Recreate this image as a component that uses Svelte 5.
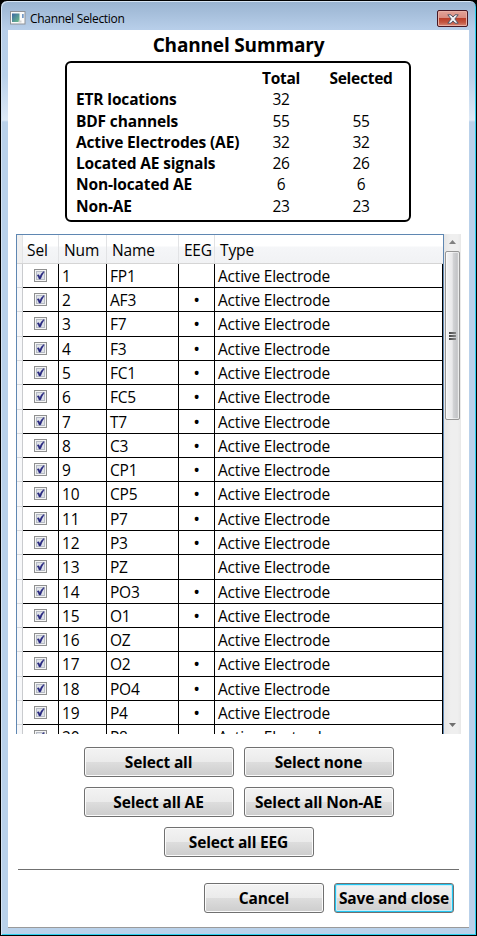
<script>
  const summary = [
    ['', 'Total', 'Selected'],
    ['ETR locations', '32', ''],
    ['BDF channels', '55', '55'],
    ['Active Electrodes (AE)', '32', '32'],
    ['Located AE signals', '26', '26'],
    ['Non-located AE', '6', '6'],
    ['Non-AE', '23', '23']
  ];
  const names = ['FP1', 'AF3', 'F7', 'F3', 'FC1', 'FC5', 'T7', 'C3', 'CP1', 'CP5', 'P7', 'P3', 'PZ', 'PO3', 'O1', 'OZ', 'O2', 'PO4', 'P4', 'P8'];
  const nonEeg = ['FP1', 'PZ', 'OZ'];
</script>

<div class="window">
  <header class="titlebar">
    <svg class="appicon" width="16" height="14" viewBox="0 0 16 14">
      <defs><linearGradient id="ig" x1="0" y1="0" x2="1" y2="1"><stop offset="0" stop-color="#3c67a5" /><stop offset="1" stop-color="#6cc08a" /></linearGradient></defs>
      <rect x=".5" y=".5" width="14.5" height="12.5" fill="#fafafa" stroke="#8e9298" />
      <rect x="2" y="2.5" width="7.5" height="8.5" fill="url(#ig)" />
      <rect x="12.3" y="3" width="1.2" height="4" fill="#3a6fb0" />
      <rect x="8.5" y="9.5" width="3" height="2" fill="#d2d2d2" />
    </svg>
    <span class="title">Channel Selection</span>
    <button class="close" aria-label="Close">
      <svg width="12" height="10" viewBox="0 0 12 10">
        <path d="M.8 .8H4L6 3.1 8 .8h3.2L7.8 5l3.4 4.2H8L6 6.9 4 9.2H.8L4.2 5z" fill="#f4f4f6" stroke="#535666" stroke-width="1" />
      </svg>
    </button>
  </header>

  <main>
    <h1>Channel Summary</h1>
    <section class="summary">
      {#each summary as [label, total, selected], i}
        <div class="srow" class:head={i === 0}>
          <b>{label}</b><span>{total}</span><span>{selected}</span>
        </div>
      {/each}
    </section>

    <section class="list">
      <div class="grid">
        <div class="row hrow">
          <i></i><span>Sel</span><span>Num</span><span>Name</span><span>EEG</span><span>Type</span>
        </div>
        {#each names as name, i}
          <div class="row drow">
            <i></i>
            <span class="sel">
              <svg width="13" height="13" viewBox="0 0 13 13">
                <rect x=".5" y=".5" width="12" height="12" fill="#f4f4f4" stroke="#8e8f8f" />
                <rect x="2.5" y="2.5" width="8" height="8" fill="#dfe2e8" stroke="#b5bac4" />
                <path d="M3.3 6.2L4.8 5.8 5.8 7.9Q7.2 4.4 9.7 2.6L10 3.1Q7.8 6 6.5 10H5.2Q4.5 7.8 3.3 6.2z" fill="#25257e" stroke="#25257e" stroke-width=".6" />
              </svg>
            </span>
            <span>{i + 1}</span>
            <span>{name}</span>
            <span class="eeg">{#if !nonEeg.includes(name)}•{/if}</span>
            <span class="type">Active Electrode</span>
          </div>
        {/each}
      </div>
      <div class="scroll">
        <svg class="arrow" width="7" height="4" viewBox="0 0 7 4"><path d="M0 4L3.5 0 7 4z" fill="#808080" /></svg>
        <div class="thumb"><b></b><b></b><b></b></div>
        <svg class="arrow down" width="7" height="4" viewBox="0 0 7 4"><path d="M0 0H7L3.5 4z" fill="#707070" /></svg>
      </div>
    </section>

    <section class="choices">
      <button>Select all</button>
      <button>Select none</button>
      <button>Select all AE</button>
      <button>Select all Non-AE</button>
      <button>Select all EEG</button>
    </section>

    <footer>
      <button>Cancel</button>
      <button class="default">Save and close</button>
    </footer>
  </main>
</div>

<style>
  :global(body) { background: #000; }
  * { box-sizing: border-box; }
  .window {
    width: 477px; height: 936px; overflow: hidden;
    border: 1px solid #000; border-radius: 7px 7px 0 0;
    background: linear-gradient(#99b3d0 0, #b7cee9 28px, #b9d1ea 75px, #dde9f6 119px, #b9d1ea 121px);
    box-shadow: inset 1px 1px 0 #d6e4f3, inset -1px -1px 0 #2ccfee;
    padding: 0 7px;
    font-family: "Open Sans", "Noto Sans", sans-serif; font-size: 15px; color: #000;
  }
  .titlebar { height: 29px; display: flex; align-items: flex-start; padding: 10px 1px 0; }
  .appicon { margin-left: 1px; flex: none; }
  .title { margin-left: 4px; font-size: 12px; line-height: 16px; letter-spacing: -.32px; white-space: nowrap; }
  .close {
    margin: -1px 0 0 auto; width: 31px; height: 17px; padding: 0; display: flex; align-items: center; justify-content: center;
    border: 1px solid #471824; border-radius: 2px;
    background: linear-gradient(#e3a398 0, #d98c80 45%, #bb3f29 50%, #c35540 75%, #d88775);
    box-shadow: inset 0 0 0 1px #e8b0a5;
  }
  main { background: #fff; height: 898px; border-bottom: 1px solid #9a9a9a; overflow: hidden; }
  h1 { margin: 0; height: 31px; line-height: 30px; font-size: 19px; font-weight: 700; text-align: center; white-space: nowrap; letter-spacing: -.17px; }
  .summary {
    width: 346px; height: 161px; margin-left: 57px; padding: 5px 0 0 9px;
    border: 2px solid #000; border-radius: 6px;
  }
  .srow { display: grid; grid-template-columns: 165px 80px 80px; height: 21.3px; line-height: 21.4px; white-space: nowrap; }
  .srow b { font-size: 15.5px; letter-spacing: -.15px; }
  .srow span { text-align: center; font-size: 15.5px; letter-spacing: -.4px; }
  .srow.head span { font-weight: 700; font-size: 15.5px; letter-spacing: -.25px; }
  .list { display: flex; margin: 12px 8px 0; height: 500px; }
  .grid { width: 428px; height: 500px; flex: none; overflow: hidden; border: 1px solid #5f87b2; border-bottom: 0; font-size: 15.5px; letter-spacing: -.09px; }
  .row { display: grid; grid-template-columns: 6px 36px 48px 72px 36px 228px; }
  .row > * { overflow: hidden; white-space: nowrap; }
  .hrow { height: 28.85px; line-height: 31px; background: linear-gradient(#fff 0, #fff 11px, #f5f6f8 12px, #f1f2f4); border-bottom: 1px solid #d5d5d5; }
  .hrow span { padding-left: 5px; border-right: 1px solid #e2e3e5; }
  .hrow span:nth-child(2) { padding-left: 4px; }
  .hrow span:nth-child(5) { letter-spacing: -.3px; }
  .hrow span:last-child { border-right: 0; }
  .hrow i { background: #f0f0f0; border-right: 1px solid #e2e3e5; }
  .drow { height: 24.29px; line-height: 25px; }
  .drow i { border-right: 1px solid #c9cbce; border-bottom: 1px solid #d5d8dc; background: #f7f8fa; }
  .drow span { border-right: 1px solid #000; border-bottom: 1px solid #000; padding-left: 3px; letter-spacing: -.2px; }
  .drow .sel { padding: 5px 0 0 11px; line-height: 0; }
  .drow .eeg { padding: 0; text-align: center; font-size: 18px; }
  .scroll {
    width: 17px; height: 500px; display: flex; flex-direction: column; align-items: center;
    background: linear-gradient(90deg, #e6e6e6, #efefef 40%, #efefef 80%, #e8e8e8);
  }
  .arrow { margin-top: 6px; flex: none; }
  .arrow.down { margin: auto 0 7px; }
  .thumb {
    width: 15px; height: 169px; margin-top: 7px; flex: none; border: 1px solid #979797; border-radius: 2px;
    background: linear-gradient(90deg, #f5f5f5, #e9e9eb 48%, #d2d3d5 55%, #c4c5c8 85%, #dcdcdc);
    box-shadow: inset 0 0 0 1px #fff8; display: flex; flex-direction: column; align-items: center; justify-content: center; gap: 1px;
  }
  .thumb b { width: 7px; height: 2px; background: linear-gradient(90deg, #444, #888); }
  .choices { display: flex; flex-wrap: wrap; justify-content: center; gap: 10px; width: 330px; margin: 13px auto 0; }
  .choices button { width: 150px; }
  main button {
    height: 30px; padding: 0 0 1px; font: inherit; font-size: 15.5px; font-weight: 700; color: #000; white-space: nowrap; letter-spacing: -.17px;
    border: 1px solid #707070; border-radius: 3px;
    background: linear-gradient(#f3f3f3, #ebebeb 49%, #dddddd 51%, #cdcdcd);
    box-shadow: inset 0 0 0 1px #fbfbfb;
  }
  footer { display: flex; justify-content: flex-end; gap: 10px; margin: 12px 10px 0; border-top: 1px solid #707070; padding: 13px 5px 0 0; }
  footer button { width: 120px; }
  main .default { box-shadow: inset 0 0 0 1px #20c4f0, inset 0 0 0 2px #c8eef9; }
</style>
